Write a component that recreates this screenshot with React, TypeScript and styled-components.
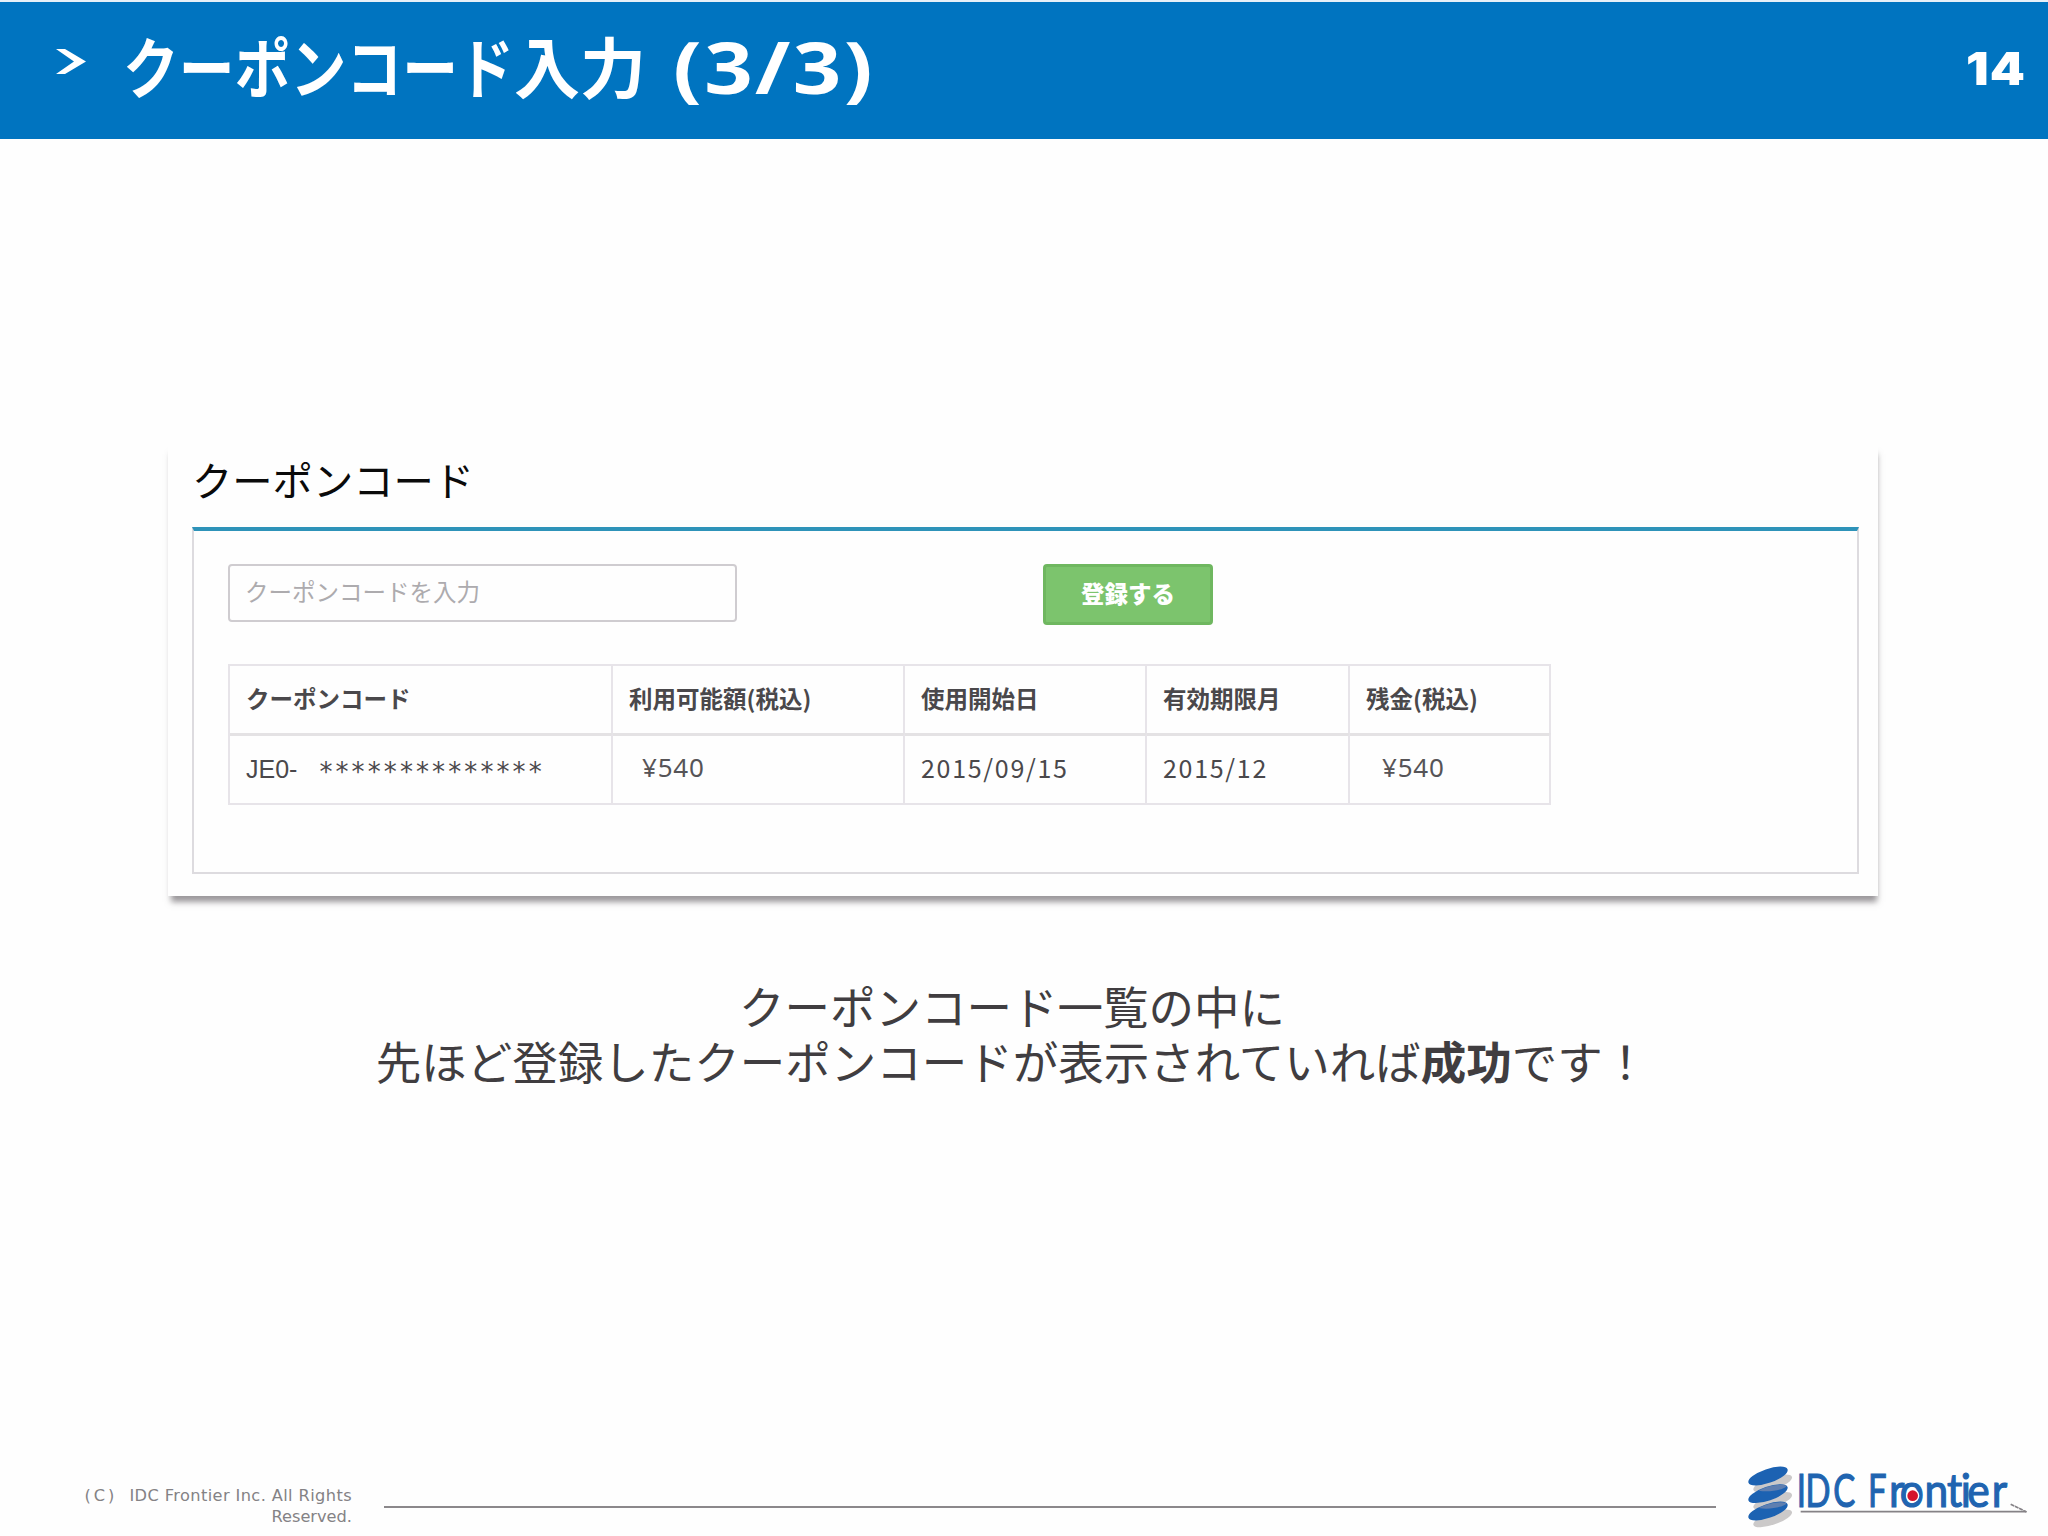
import React from "react";
import styled, { createGlobalStyle } from "styled-components";

const jp = '"Noto Sans CJK JP", "Noto Sans", sans-serif';

const GlobalStyle = createGlobalStyle`
  *, *::before, *::after { box-sizing: border-box; }
  body { margin: 0; background: #fefefe; font-family: ${jp}; }
`;

const Slide = styled.div`
  width: 2048px;
  height: 1536px;
  display: flex;
  flex-direction: column;
  overflow: hidden;
  background: #fefefe;
`;

const Header = styled.header`
  height: 139px;
  flex: none;
  display: flex;
  align-items: flex-start;
  padding: 0 22px 0 56px;
  background: #0074c0;
  border-top: 2px solid #e6f0f8;
  color: #fff;
`;

const Chevron = styled.svg`
  width: 30px;
  height: 26px;
  margin-top: 47px;
  flex: none;
`;

const Title = styled.h1`
  margin: 0 0 0 37px;
  flex: 1;
  display: flex;
  align-items: baseline;
  font-size: 66px;
  line-height: 96px;
  padding-top: 14px;
  font-weight: 700;
  white-space: nowrap;
`;

const NarrowKana = styled.span`
  display: inline-block;
  width: 391px;
  transform: scaleX(0.846);
  transform-origin: left;
`;

const Counter = styled.span`
  display: inline-block;
  margin-left: 27px;
  font-family: "Noto Sans", sans-serif;
  font-size: 72px;
  letter-spacing: 2px;
  transform: translateY(1px) scaleX(1.18);
  transform-origin: left;
`;

const PageNumber = styled.span`
  font-family: Inter, sans-serif;
  font-weight: 900;
  font-size: 46px;
  line-height: 50px;
  letter-spacing: 1px;
  margin-top: 41px;
  transform: scaleX(1.09);
  transform-origin: right;
`;

const Card = styled.section`
  width: 1710px;
  height: 452px;
  flex: none;
  margin: 305px 0 0 168px;
  padding: 6px 19px 0 24px;
  background: #fefefe;
  box-shadow: 1px 8px 6px -2px rgba(70, 64, 70, 0.54);
`;

const CardTitle = styled.h2`
  margin: 0 0 20px;
  font-size: 40.3px;
  font-weight: 400;
  line-height: 57px;
  color: #0a0a0a;
`;

const Panel = styled.div`
  height: 347px;
  border: 2px solid #dddbdf;
  border-top: 4px solid #2e93b9;
  padding: 33px 0 0 34px;
`;

const FormRow = styled.div`
  display: flex;
  align-items: flex-start;
  gap: 306px;
`;

const CodeInput = styled.input`
  width: 509px;
  height: 58px;
  border: 2px solid #cfccd0;
  border-radius: 4px;
  padding: 0 15px 4px;
  background: transparent;
  font: 400 23.5px ${jp};
  outline: none;
  &::placeholder { color: #adabae; opacity: 1; }
`;

const SubmitButton = styled.button`
  width: 170px;
  height: 61px;
  border: 3px solid #6fb760;
  border-radius: 4px;
  padding: 0 0 3px;
  background: #7cc46d;
  color: #fff;
  font: 900 23.5px ${jp};
`;

const Table = styled.div`
  margin-top: 39px;
  width: 1323px;
  display: grid;
  grid-template-columns: 383px 292px 242px 203px 201px;
  grid-template-rows: 67px 72px;
  border-left: 2px solid #e7e4e9;
  border-top: 2px solid #e7e4e9;
`;

const Cell = styled.div<{ $head?: boolean; $pad?: number }>`
  display: flex;
  align-items: ${(p) => (p.$head ? "center" : "baseline")};
  padding: ${(p) => (p.$head ? "0 0 4px" : "13px 0 0")};
  padding-left: ${(p) => p.$pad ?? 16}px;
  border-right: 2px solid #e7e4e9;
  border-bottom: ${(p) => (p.$head ? "0" : "2px solid #e7e4e9")};
  border-top: ${(p) => (p.$head ? "0" : "3px solid #e4e2e4")};
  font-size: 23.5px;
  font-weight: ${(p) => (p.$head ? 700 : 400)};
  color: #4a484b;
  white-space: nowrap;
`;

const DateText = styled.span`
  font-size: 25px;
  line-height: 36px;
  letter-spacing: 1.7px;
`;

const Yen = styled.span`
  font-family: "Noto Sans", sans-serif;
  font-size: 26px;
  line-height: 36px;
  letter-spacing: 0.8px;
  color: #565457;
`;

const CodePrefix = styled.span`
  font-family: "Liberation Sans", Arial, sans-serif;
  font-size: 25px;
  line-height: 38px;
  transform: translateY(1px);
`;

const Mask = styled.span`
  font-family: "DejaVu Sans", sans-serif;
  font-size: 26px;
  line-height: 36px;
  letter-spacing: 3.1px;
  margin-left: 22px;
  transform: translateY(4px);
`;

const Caption = styled.p`
  margin: 82px 0 0;
  width: 2024px;
  text-align: center;
  font-size: 45.5px;
  line-height: 55px;
  color: #403d40;
  font-weight: 400;
`;

const Footer = styled.footer`
  margin-top: auto;
  height: 86px;
  flex: none;
  display: flex;
  align-items: flex-start;
`;

const Copyright = styled.div`
  width: 352px;
  padding-top: 35px;
  text-align: right;
  font-family: "DejaVu Sans", sans-serif;
  font-size: 16.2px;
  line-height: 21px;
  color: #848285;
  white-space: nowrap;
`;

const CopyrightLine = styled.div`
  letter-spacing: 0.4px;
`;

const Mark = styled.span`
  margin-right: 12px;
  letter-spacing: 3px;
`;

const Rule = styled.div`
  width: 1332px;
  height: 2px;
  margin: 56px 0 0 32px;
  background: #8b888b;
`;

const Logo = styled.svg`
  width: 348px;
  height: 86px;
  margin-left: -16px;
  flex: none;
`;

const headings = ["クーポンコード", "利用可能額(税込)", "使用開始日", "有効期限月", "残金(税込)"];

function BrandLogo() {
  return (
    <Logo viewBox="0 0 1044 258">
      {[0, 53, 105].map((y) => (
        <g key={y}>
          <ellipse cx="218" cy={100 + y} rx="61" ry="19" transform={`rotate(-19 218 ${100 + y})`} fill="#cbc9c9" />
          <ellipse cx="204" cy={78 + y} rx="62" ry="21" transform={`rotate(-19 204 ${78 + y})`} fill="#1c62b2" />
          {y > 0 && (
            <path
              transform={`translate(0 ${y})`}
              d="M176 69C200 55 240 47 259 54C262 62 215 76 176 69Z"
              fill="#5f7fb0"
            />
          )}
        </g>
      ))}
      <g fill="#2064b0" stroke="#2064b0" strokeWidth="3.5" fontFamily="Lato, sans-serif" fontSize="137">
        <text transform="translate(0 170) scale(.72 1)" x="403 440 555 700">IDCF</text>
        <text transform="translate(0 170) scale(.93 1)" x="610 644 724 797 841 862 941">rontier</text>
      </g>
      <circle cx="638" cy="137" r="20" fill="#fefefe" />
      <circle cx="638" cy="137" r="16" fill="#d4142c" />
      <path d="M302 185H978" stroke="#858286" strokeWidth="5" />
      <path d="M932 163L980 186" stroke="#858286" strokeWidth="5" strokeDasharray="12 2" />
    </Logo>
  );
}

export default function App() {
  return (
    <>
      <GlobalStyle />
      <Slide>
        <Header>
          <Chevron viewBox="0 0 30 26">
            <path d="M0 0H9L30 12.5L9 25H0L18 12.5Z" fill="#fff" />
          </Chevron>
          <Title>
            <NarrowKana>クーポンコード</NarrowKana>
            <span>入力</span>
            <Counter>(3/3)</Counter>
          </Title>
          <PageNumber>14</PageNumber>
        </Header>

        <Card>
          <CardTitle>クーポンコード</CardTitle>
          <Panel>
            <FormRow>
              <CodeInput placeholder="クーポンコードを入力" />
              <SubmitButton>登録する</SubmitButton>
            </FormRow>
            <Table>
              {headings.map((h) => (
                <Cell key={h} $head>{h}</Cell>
              ))}
              <Cell>
                <CodePrefix>JE0-</CodePrefix>
                <Mask>**************</Mask>
              </Cell>
              <Cell $pad={29}><Yen>¥540</Yen></Cell>
              <Cell><DateText>2015/09/15</DateText></Cell>
              <Cell><DateText>2015/12</DateText></Cell>
              <Cell $pad={32}><Yen>¥540</Yen></Cell>
            </Table>
          </Panel>
        </Card>

        <Caption>
          クーポンコード一覧の中に
          <br />
          先ほど登録したクーポンコードが表示されていれば<b>成功</b>です！
        </Caption>

        <Footer>
          <Copyright>
            <CopyrightLine>
              <Mark>(C)</Mark>IDC Frontier Inc. All Rights
            </CopyrightLine>
            Reserved.
          </Copyright>
          <Rule />
          <BrandLogo />
        </Footer>
      </Slide>
    </>
  );
}
